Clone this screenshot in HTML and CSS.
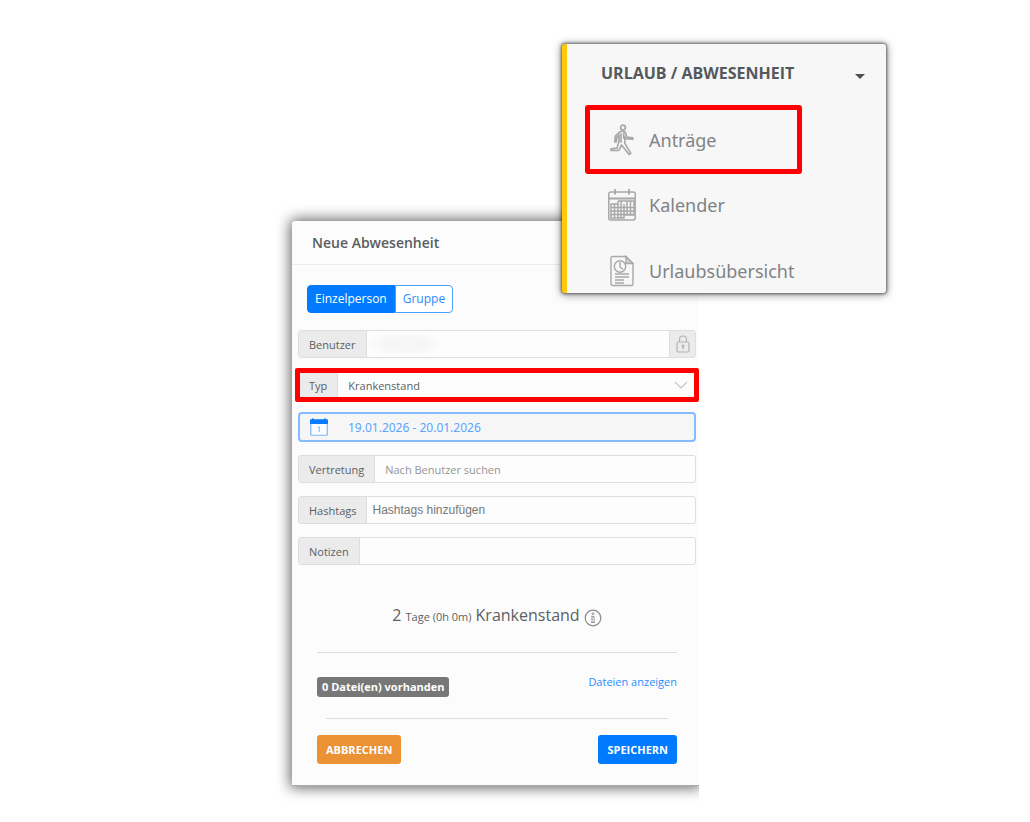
FILE: index.html
```html
<!DOCTYPE html>
<html lang="de">
<head>
<meta charset="utf-8">
<title>Neue Abwesenheit</title>
<link rel="stylesheet" href="styles.css">
</head>
<body>
<main class="stage">
  <form class="dialog">
    <h1 class="dialog-title">Neue Abwesenheit</h1>
    <div class="segment">
      <button type="button" class="segment-item active">Einzelperson</button>
      <button type="button" class="segment-item">Gruppe</button>
    </div>
    <div class="fields">
      <div class="field">
        <label class="field-label" for="user">Benutzer</label>
        <span class="user-value"><input class="field-input" id="user" type="text" readonly></span>
        <span class="lock">
          <svg width="16" height="18" viewBox="0 0 16 18" fill="none" stroke="#b4b4b4" stroke-width="1.2"><rect x="2" y="7" width="12" height="10" rx="1.5"/><path d="M4.500 7V4.500a3.500 3.500 0 0 1 7 0V7M8 11v3.500"/><circle cx="8" cy="11" r=".8"/></svg>
        </span>
      </div>
      <div class="field marked">
        <label class="field-label" for="type">Typ</label>
        <select class="field-input" id="type"><option>Krankenstand</option></select>
        <svg class="chevron" width="14" height="8" viewBox="0 0 14 8" fill="none" stroke="#c6c6c6" stroke-width="1.200"><path d="M1 1l6 6 6-6"/></svg>
      </div>
      <button type="button" class="date">
        <svg width="18" height="18" viewBox="0 0 18 18"><rect x=".75" y="1.500" width="16.500" height="15.750" rx="1" fill="#fafcff" stroke="#7ab5ff" stroke-width="1.200"/><path d="M0 6V1.500h2V.5h2v1h10v-1h2v1h2V6z" fill="#0a7bff"/><path d="M8 9.500l1.200-.7V14" fill="none" stroke="#7ab5ff"/></svg>
        <span>19.01.2026 - 20.01.2026</span>
      </button>
      <div class="field">
        <label class="field-label" for="sub">Vertretung</label>
        <input class="field-input" id="sub" type="text" placeholder="Nach Benutzer suchen">
      </div>
      <div class="field">
        <label class="field-label" for="tags">Hashtags</label>
        <input class="field-input tags" id="tags" type="text" placeholder="Hashtags hinzufügen">
      </div>
      <div class="field">
        <label class="field-label" for="notes">Notizen</label>
        <input class="field-input" id="notes" type="text">
      </div>
    </div>
    <p class="summary">2 <small>Tage (0h 0m)</small> Krankenstand
      <svg width="18" height="18" viewBox="0 0 18 18" fill="none" stroke="#8d8d8d"><circle cx="9" cy="9" r="7.800" stroke-width="1.200"/><path d="M7.500 7.500h2.500v6M7 13.500h4M8 7.500v6" stroke-width=".9"/><circle cx="9" cy="4.800" r="1" stroke-width=".9"/></svg>
    </p>
    <div class="files">
      <span class="badge">0 Datei(en) vorhanden</span>
      <a class="files-link" href="#">Dateien anzeigen</a>
    </div>
    <div class="actions">
      <button type="button" class="action cancel">ABBRECHEN</button>
      <button type="submit" class="action save">SPEICHERN</button>
    </div>
  </form>
  <nav class="menu">
    <button type="button" class="menu-head">URLAUB / ABWESENHEIT
      <svg width="10" height="5" viewBox="0 0 10 5"><path d="M0 0h10L5 5z" fill="#4c4f53"/></svg>
    </button>
    <a class="menu-item current" href="#">
      <svg width="28" height="32" viewBox="0 0 28 32" fill="none" stroke="#a8a8a8" stroke-width="1.700" stroke-linejoin="round" stroke-linecap="round"><circle cx="15" cy="3.500" r="2.400"/><path d="M12 8c2-1.500 5-1 5.500 1l1.300 4 6 .8v1.400l-7-.6-1-1.700v6.500l6 10-1.700 1.100-7.600-9.500-2 4.500-1.500 1H3v-1.700l6-.6 2-6.500V11L9 13l-.8 5-1.400-.2.600-6z"/><path d="M13 10v8M15.700 9v5"/></svg>
      Anträge
    </a>
    <a class="menu-item" href="#">
      <svg width="28" height="32" viewBox="0 0 28 32" fill="none" stroke="#a8a8a8" stroke-width="1.500"><rect x=".8" y="3" width="26.400" height="28" rx="2"/><path d="M1 9.500h26M7 0v5.500M21 0v5.500" stroke-width="1.800"/><path d="M10 12h16v14H16M10 12v3H3v14h13V15M3 18.500h23M3 22h23M3 25.500h23M6.500 15v14M10 15v14M13 12v17M19 12v14M22.500 12v14" stroke-width="1.500"/></svg>
      Kalender
    </a>
    <a class="menu-item" href="#">
      <svg width="28" height="32" viewBox="0 0 28 32" fill="none" stroke="#a8a8a8" stroke-width="1.400"><path d="M5 1.500h13l7 7v20a2 2 0 0 1-2 2H5a2 2 0 0 1-2-2v-25a2 2 0 0 1 2-2z"/><path d="M18 1.500v7h7z" fill="#cfcfcf"/><circle cx="12" cy="11.500" r="5.700"/><path d="M12 7v5l3 2.500M7 19h14M7 22h14M7 25h9M7 28h9"/></svg>
      Urlaubsübersicht
    </a>
  </nav>
</main>
</body>
</html>
```
FILE: styles.css
```css
* { box-sizing: border-box; }

body {
  margin: 0;
  background: #fff;
  color: #5c5f62;
  font-family: "Open Sans", "Noto Sans", sans-serif;
  font-size: 11px;
}

button, input, select { font: inherit; color: inherit; margin: 0; }
a { text-decoration: none; }
svg { flex: none; }

/* The menu shares its first column with the dialog, so it overlaps it. */
.stage {
  display: grid;
  grid-template-columns: 292fr 270fr 137fr 187fr 144fr;
  align-items: start;
  padding-bottom: 36px;
}

.dialog {
  grid-area: 1 / 2 / 2 / 4;
  margin-top: 221px;
  padding-bottom: 21px;
  background: #fcfcfc;
  border-radius: 3px 0 0 0;
  border-bottom: 1px solid #aaa;
  box-shadow: 0 0 14px 2px rgba(0, 0, 0, .6);
  clip-path: inset(-30px 0 -30px -30px);
}

.dialog-title {
  margin: 0;
  padding: 0 20px;
  font-size: 14px;
  line-height: 43px;
  font-weight: 600;
  color: #5a5d60;
  border-bottom: 1px solid #ececec;
}

.segment { display: flex; margin: 20px 15px 17px; }

.segment-item {
  height: 28px;
  padding: 0 7px;
  font-size: 12px;
  line-height: 24px;
  border: 1px solid #4c9fff;
  border-radius: 0 4px 4px 0;
  background: #fff;
  color: #2b8cff;
}

.segment-item.active {
  border-color: #007bff;
  border-radius: 4px 0 0 4px;
  background: #007bff;
  color: #fff;
}

.fields { display: grid; gap: 13px; padding: 0 3px 0 6px; }

.field {
  display: flex;
  height: 28px;
  border: 1px solid #dedede;
  border-radius: 3px;
  background: #fdfdfd;
}

.field-label {
  display: flex;
  align-items: center;
  padding: 0 10px;
  background: #ebebeb;
  border-right: 1px solid #dedede;
}

.field-input {
  flex: 1;
  min-width: 0;
  padding: 0 10px;
  border: 0;
  background: transparent;
  appearance: none;
  outline: 0;
}

.field-input::placeholder { color: #959595; opacity: 1; }
.tags { padding: 0 5px; font-family: "Liberation Sans", sans-serif; font-size: 12px; }
.tags::placeholder { color: #777; }

.user-value {
  flex: 1;
  display: flex;
  background: radial-gradient(ellipse 40px 12px at 38px 13px, #f6f6f6 50%, transparent);
}

.lock {
  display: grid;
  place-items: center;
  width: 26px;
  background: #ebebeb;
  border-left: 1px solid #dedede;
}

.marked {
  height: 34px;
  margin: -3px;
  border: 5px solid #f00;
  border-radius: 2px;
}

.marked .field-label { padding: 0 10px 0 9px; }
.chevron { align-self: center; margin-right: 6px; }

.date {
  display: flex;
  align-items: center;
  gap: 20px;
  height: 30px;
  padding: 0 10px;
  border: 2px solid #85bbff;
  border-radius: 4px;
  background: #f6f6f6;
  color: #5aa5ff;
  font-family: "Noto Sans", sans-serif;
  font-size: 12px;
}

.summary {
  display: flex;
  justify-content: center;
  align-items: baseline;
  gap: 4px;
  margin: 37px 22px 0 25px;
  height: 51px;
  border-bottom: 1px solid #dcdcdc;
  font-size: 16px;
  line-height: 26px;
}

.summary small { font-size: 11px; }
.summary svg { align-self: flex-start; margin-top: 7px; }

.files {
  display: flex;
  justify-content: space-between;
  align-items: flex-start;
  margin: 0 31px 0 34px;
  height: 66px;
  padding-top: 24px;
  border-bottom: 1px solid #dcdcdc;
}

.badge {
  margin-left: -9px;
  padding: 0 5px;
  line-height: 20px;
  border-radius: 3px;
  background: #777;
  color: #fff;
  font-size: 11px;
  font-weight: 700;
}

.files-link { margin-right: -9px; line-height: 10px; color: #2b8cff; }

.actions { display: flex; justify-content: space-between; margin: 16px 22px 0 25px; }

.action {
  height: 29px;
  padding: 0 9px;
  border: 0;
  border-radius: 3px;
  color: #fff;
  font-size: 11px;
  font-weight: 700;
}

.cancel { background: #eb9234; }
.save { background: #007bff; }

.menu {
  grid-area: 1 / 3 / 2 / 5;
  z-index: 1;
  margin-top: 44px;
  overflow: hidden;
  border-left: 5px solid #ffcb05;
  border-radius: 3px;
  background: #f7f7f7;
  box-shadow: 0 0 3px 1px rgba(0, 0, 0, .5), 0 1px 8px 1px rgba(0, 0, 0, .4);
  color: #808386;
  font-family: "Noto Sans", sans-serif;
  font-size: 18px;
}

.menu-head {
  display: flex;
  justify-content: space-between;
  align-items: center;
  width: 100%;
  height: 61px;
  padding: 0 21px 4px 34px;
  border: 0;
  background: none;
  color: #55595d;
  font-family: "Open Sans", sans-serif;
  font-size: 16px;
  font-weight: 700;
}

.menu-head svg { margin-top: 7px; }

.menu-item {
  display: flex;
  align-items: center;
  gap: 13px;
  height: 66px;
  padding-left: 41px;
  color: inherit;
}

.menu-item:last-child { margin-bottom: -11px; }

.current {
  width: 217px;
  height: 69px;
  margin: 0 0 -2px 18px;
  padding-left: 18px;
  border: 5px solid #f00;
  border-radius: 3px;
}
```
